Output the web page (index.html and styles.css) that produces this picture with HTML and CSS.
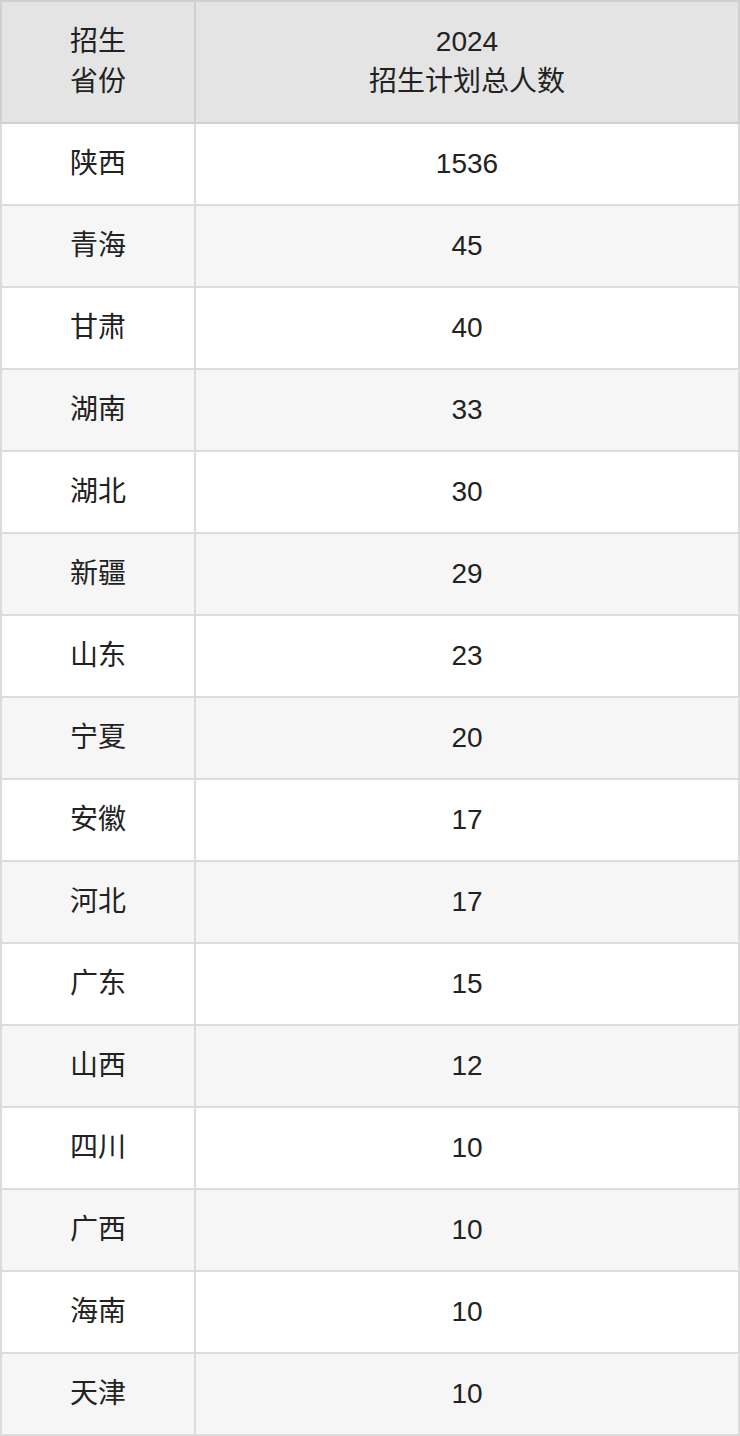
FILE: index.html
```html
<!DOCTYPE html>
<html lang="zh">
<head>
<meta charset="utf-8">
<title>招生计划</title>
<link rel="stylesheet" href="styles.css">
</head>
<body>
<table class="plan">
  <thead>
    <tr><th class="c1">招生<br>省份</th><th class="c2">2024<br>招生计划总人数</th></tr>
  </thead>
  <tbody>
    <tr><td>陕西</td><td>1536</td></tr>
    <tr><td>青海</td><td>45</td></tr>
    <tr><td>甘肃</td><td>40</td></tr>
    <tr><td>湖南</td><td>33</td></tr>
    <tr><td>湖北</td><td>30</td></tr>
    <tr><td>新疆</td><td>29</td></tr>
    <tr><td>山东</td><td>23</td></tr>
    <tr><td>宁夏</td><td>20</td></tr>
    <tr><td>安徽</td><td>17</td></tr>
    <tr><td>河北</td><td>17</td></tr>
    <tr><td>广东</td><td>15</td></tr>
    <tr><td>山西</td><td>12</td></tr>
    <tr><td>四川</td><td>10</td></tr>
    <tr><td>广西</td><td>10</td></tr>
    <tr><td>海南</td><td>10</td></tr>
    <tr><td>天津</td><td>10</td></tr>
  </tbody>
</table>
</body>
</html>
```
FILE: styles.css
```css
html, body {
  margin: 0;
  padding: 0;
  background: #ffffff;
}
.plan {
  width: 740px;
  border-collapse: collapse;
  table-layout: fixed;
  font-family: "Liberation Sans", Arial, "Noto Sans CJK SC", sans-serif;
  font-size: 28px;
  line-height: 40px;
  color: #222222;
}
.plan th, .plan td {
  text-align: center;
  vertical-align: middle;
  padding: 20px 0;
  border: 2px solid #dcdcdc;
  font-weight: normal;
}
.plan th {
  background: #e4e4e4;
  border-color: #d0d0d0;
  height: 80px;
}
.plan td {
  height: 40px;
}
.plan .c1 {
  width: 192px;
}
.plan tbody tr:nth-child(even) td {
  background: #f6f6f6;
}
```
